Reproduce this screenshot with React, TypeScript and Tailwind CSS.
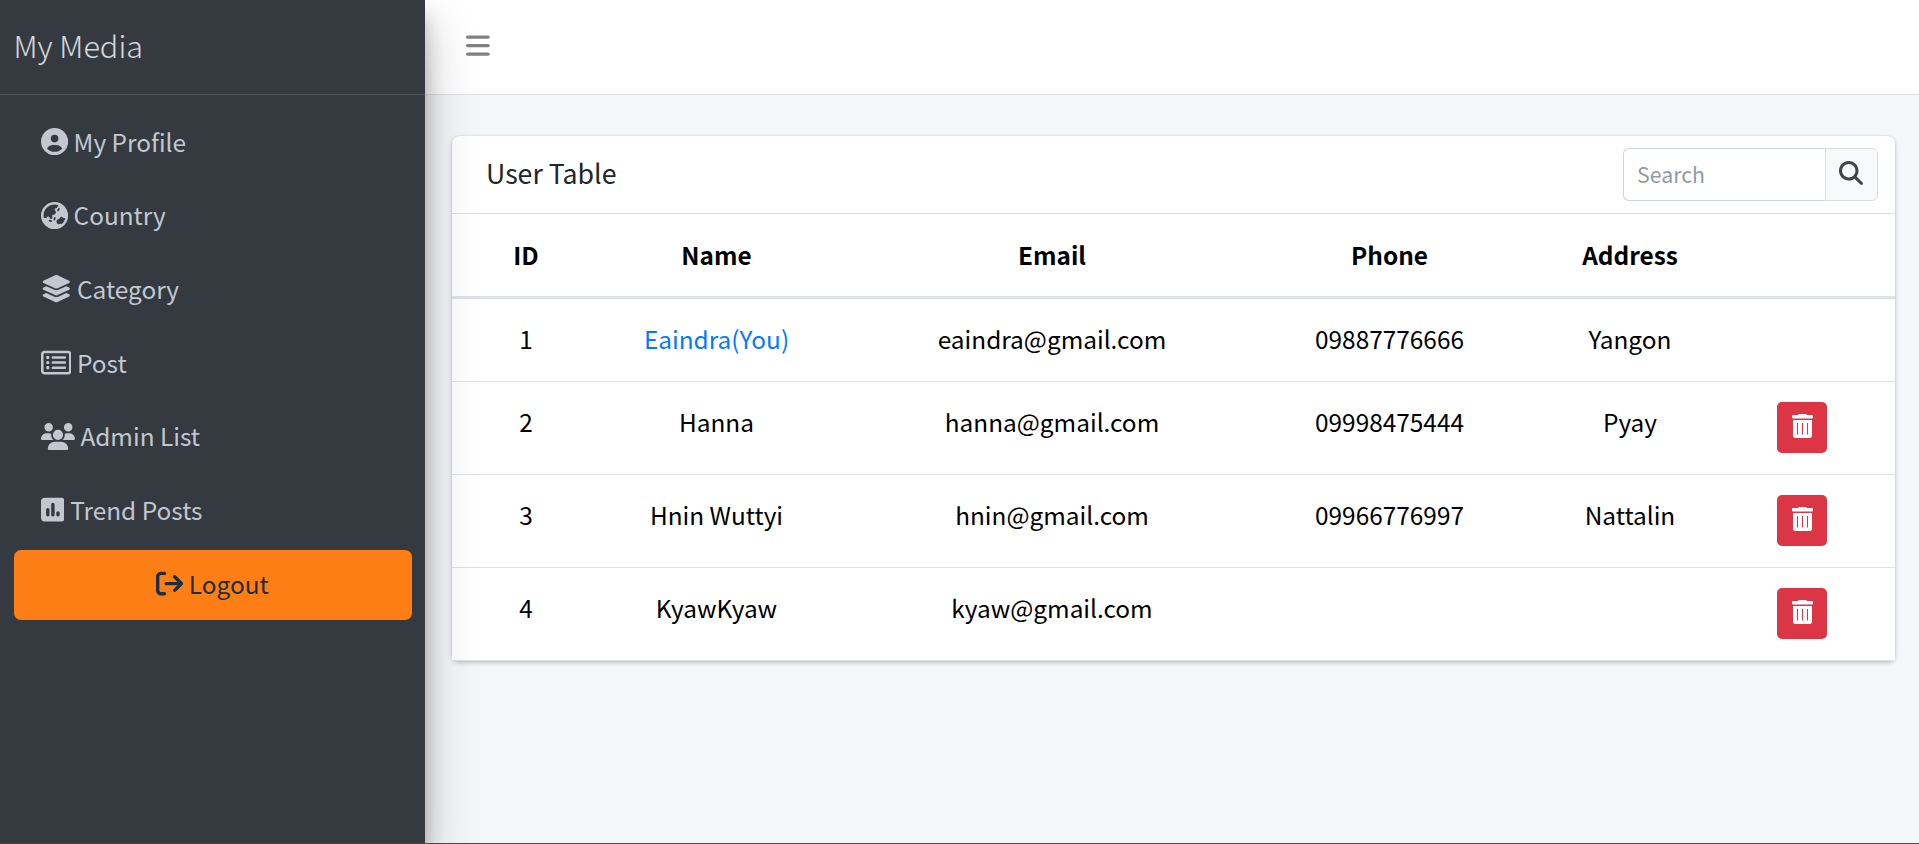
import { FaBars, FaCircleUser, FaEarthAsia, FaLayerGroup, FaRegRectangleList, FaUsers, FaSquarePollVertical, FaArrowRightFromBracket, FaMagnifyingGlass } from "react-icons/fa6";
import type { IconType } from "react-icons";

const navItems: { label: string; icon: IconType; width: string }[] = [
  { label: "My Profile", icon: FaCircleUser, width: "w-[27.2px]" },
  { label: "Country", icon: FaEarthAsia, width: "w-[27.2px]" },
  { label: "Category", icon: FaLayerGroup, width: "w-[30.6px]" },
  { label: "Post", icon: FaRegRectangleList, width: "w-[30.6px]" },
  { label: "Admin List", icon: FaUsers, width: "w-[34px]" },
  { label: "Trend Posts", icon: FaSquarePollVertical, width: "w-[23.8px]" },
];

const users = [
  { id: 1, name: "Eaindra(You)", email: "eaindra@gmail.com", phone: "09887776666", address: "Yangon", self: true },
  { id: 2, name: "Hanna", email: "hanna@gmail.com", phone: "09998475444", address: "Pyay", self: false },
  { id: 3, name: "Hnin Wuttyi", email: "hnin@gmail.com", phone: "09966776997", address: "Nattalin", self: false },
  { id: 4, name: "KyawKyaw", email: "kyaw@gmail.com", phone: "", address: "", self: false },
];

function TrashIcon() {
  return (
    <svg viewBox="0 0 21 24" className="h-6 w-[21px]" fill="none">
      <path d="M1 1H6L7 0H14L15 1H20A1 1 0 0 1 21 2V3.5Q21 4.5 20 4.5H1Q0 4.5 0 3.5V2A1 1 0 0 1 1 1Z" fill="#fff" />
      <path d="M1 6H20V21.5A2.5 2.5 0 0 1 17.5 24H3.5A2.5 2.5 0 0 1 1 21.5Z" fill="#fff" />
      <path d="M5.5 9V20.5M10.5 9V20.5M15.5 9V20.5" stroke="#dc3545" strokeWidth="1.1" />
    </svg>
  );
}

function Sidebar() {
  return (
    <aside className="relative z-10 h-full w-[425px] shrink-0 bg-[#343a40] shadow-[0_24px_48px_rgba(0,0,0,0.25),0_17px_17px_rgba(0,0,0,0.22)]">
      <div className="flex h-[95px] items-center border-b border-[#4b545c] pb-1 pl-[13.5px] text-[30.6px] font-light text-white/80">
        My Media
      </div>
      <nav className="flex flex-col pt-[10px] text-[#c2c7d0]">
        {navItems.map(({ label, icon: Icon, width }) => (
          <a key={label} className="flex h-[73.6px] items-center gap-[5.8px] pl-[40.6px]">
            <Icon className={`h-[27.2px] shrink-0 ${width}`} />
            <span className="pb-px">{label}</span>
          </a>
        ))}
      </nav>
      <button className="mx-3.5 mt-[3.4px] flex h-[70px] w-[398px] items-center justify-center gap-[5.3px] rounded-[7px] bg-[#fd7e14] pr-px pb-[2px] text-[#1f2d3d]">
        <FaArrowRightFromBracket className="size-[27.2px]" />
        <span className="pb-px">Logout</span>
      </button>
    </aside>
  );
}

export default function App() {
  return (
    <div className="flex h-[844px] w-full overflow-hidden border-b border-[#4a4a45] bg-[#f4f6f9] font-['Noto_Sans_CJK_SC','Noto_Sans',sans-serif] text-[24.4px] leading-[41px]">
      <Sidebar />
      <div className="flex min-w-0 flex-1 flex-col">
        <header className="flex h-[95px] shrink-0 items-center border-b border-[#dee2e6] bg-white pb-[2px] pl-[41px]">
          <FaBars className="h-[27.2px] w-[23.8px] text-[#808080]" />
        </header>
        <main className="pt-[41px] pr-6 pl-[27px]">
          <section className="h-[525px] rounded-[7px] bg-white shadow-[0_0_2px_rgba(0,0,0,0.125),0_2px_5px_rgba(0,0,0,0.2)]">
            <div className="flex h-[78px] items-center justify-between border-b border-[#dfdfdf] pr-[17px] pl-[34px]">
              <h3 className="pb-1 text-[26.7px] text-[#212529]">User Table</h3>
              <div className="flex h-[53px] w-[255px]">
                <input
                  placeholder="Search"
                  className="w-[202px] rounded-l-[6px] border border-r-0 border-[#ced4da] px-[13px] pb-[2px] text-[21.3px] outline-none placeholder:text-[#939ba2]"
                />
                <button aria-label="Search" className="flex flex-1 items-center justify-center rounded-r-[6px] border border-[#dddddd] bg-[#f8f9fa] pr-px pb-1 text-[#444]">
                  <FaMagnifyingGlass className="size-6" />
                </button>
              </div>
            </div>
            <table className="w-full table-fixed border-separate border-spacing-0 bg-white text-center text-black">
              <colgroup>
                <col className="w-[148px]" />
                <col className="w-[233px]" />
                <col className="w-[438px]" />
                <col className="w-[237px]" />
                <col className="w-[244px]" />
                <col />
              </colgroup>
              <thead>
                <tr>
                  {["ID", "Name", "Email", "Phone", "Address", ""].map((title) => (
                    <th key={title} className="h-[85px] border-b-3 border-[#dee2e6] p-0 pb-px font-bold">{title}</th>
                  ))}
                </tr>
              </thead>
              <tbody className="[&>tr+tr>td]:h-[93px] [&>tr+tr>td]:border-t [&>tr+tr:last-child>td]:h-[94px] [&>tr:last-child>td]:border-b [&>tr>td]:border-[#dee2e6] [&>tr>td]:align-top">
                {users.map((user) => (
                  <tr key={user.id}>
                    <td className="h-[82px] px-0 pt-[19px] pb-0">{user.id}</td>
                    <td className={user.self ? "px-0 pt-[19px] pb-0 text-[#007bff]" : "px-0 pt-[19px] pb-0"}>{user.name}</td>
                    <td className="px-0 pt-[19px] pb-0">{user.email}</td>
                    <td className="px-0 pt-[19px] pb-0">{user.phone}</td>
                    <td className="px-0 pt-[19px] pb-0">{user.address}</td>
                    <td className="pt-5 pr-0 pb-0 pl-[25px]">
                      {!user.self && (
                        <button aria-label="Delete" className="flex h-[51px] w-[50px] items-start justify-center rounded-[5px] bg-[#dc3545] pt-3 pl-px">
                          <TrashIcon />
                        </button>
                      )}
                    </td>
                  </tr>
                ))}
              </tbody>
            </table>
          </section>
        </main>
      </div>
    </div>
  );
}
